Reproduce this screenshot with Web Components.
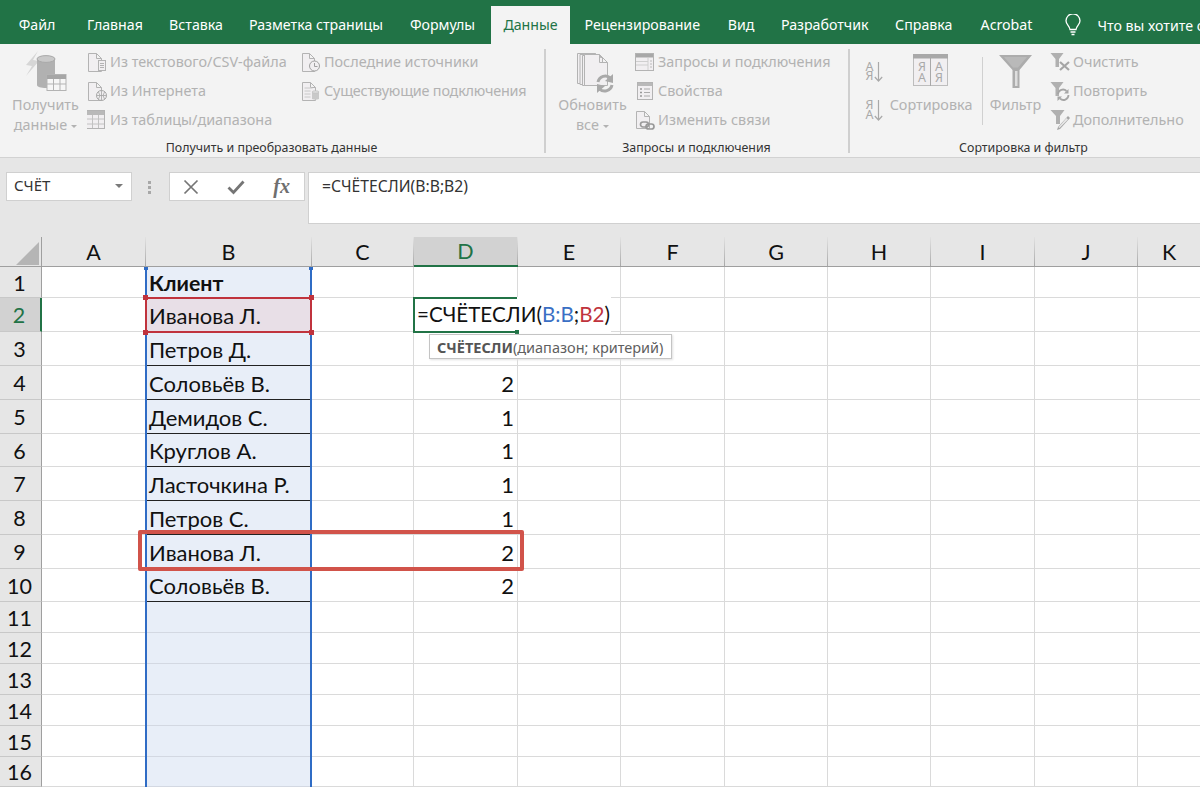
<!DOCTYPE html>
<html lang="ru">
<head>
<meta charset="utf-8">
<title>Excel</title>
<style>
  html, body { margin: 0; height: 787px; overflow: hidden; background: #fff; }
  body { display: flex; flex-direction: column; font-family: "Noto Sans", sans-serif; }
</style>
</head>
<body>
<x-tabbar></x-tabbar>
<x-ribbon>
  <x-ribbon-group label="Получить и преобразовать данные" style="width:546px" pad="6">
    <x-large-btn icon="getdata" iy="4" w="79" l1="Получить" l2="данные" caret></x-large-btn>
    <x-btn-col w="214" style="margin-left:2px">
      <x-small-btn icon="doccsv" label="Из текстового/CSV-файла"></x-small-btn>
      <x-small-btn icon="docweb" label="Из Интернета"></x-small-btn>
      <x-small-btn icon="table" label="Из таблицы/диапазона"></x-small-btn>
    </x-btn-col>
    <x-btn-col w="235">
      <x-small-btn icon="docclock" label="Последние источники"></x-small-btn>
      <x-small-btn icon="docdb" label="Существующие подключения" style="letter-spacing:-.2px"></x-small-btn>
    </x-btn-col>
  </x-ribbon-group>
  <x-ribbon-group label="Запросы и подключения" style="width:304px" pad="12">
    <x-large-btn icon="refresh" iy="5" w="69" l1="Обновить" l2="все" caret></x-large-btn>
    <x-btn-col w="210" style="margin-left:8px">
      <x-small-btn icon="queries" label="Запросы и подключения"></x-small-btn>
      <x-small-btn icon="props" label="Свойства"></x-small-btn>
      <x-small-btn icon="links" label="Изменить связи"></x-small-btn>
    </x-btn-col>
  </x-ribbon-group>
  <x-ribbon-group label="Сортировка и фильтр" style="flex:1" pad="15" last>
    <x-sort-col></x-sort-col>
    <x-large-btn icon="sort" iy="7" w="82" l1="Сортировка" style="margin-left:3px"></x-large-btn>
    <x-vsep></x-vsep>
    <x-large-btn icon="filter" iy="7" w="51" l1="Фильтр" style="margin-left:7px"></x-large-btn>
    <x-btn-col w="150" style="margin-left:9px">
      <x-small-btn icon="fclear" label="Очистить"></x-small-btn>
      <x-small-btn icon="frepeat" label="Повторить"></x-small-btn>
      <x-small-btn icon="fadv" label="Дополнительно"></x-small-btn>
    </x-btn-col>
  </x-ribbon-group>
</x-ribbon>
<x-formula-bar name="СЧЁТ" formula="=СЧЁТЕСЛИ(B:B;B2)"></x-formula-bar>
<x-sheet></x-sheet>

<script>
const G = '#b3b3b3', L = '#f1eff1';
const page = (x, y, w, h, f = 5) =>
  `<path d="M${x + .5} ${y + .5}h${w - f}l${f} ${f}v${h - f}h-${w}z M${x + w - f + .5} ${y + .5}v${f}h${f}" fill="${L}" stroke="${G}"/>`;

const ICONS = {
  getdata: `<svg width="42" height="42" viewBox="0 0 42 42">
    <path d="M13 0L1 14l6 1-6 10 13-15-6-1z" fill="#d6d6d6"/>
    <g transform="translate(1 0)">
    <path d="M11 8v26c0 2 4 3 9 3s9-1 9-3V8z" fill="#b1b1b1"/>
    <ellipse cx="20" cy="8" rx="9" ry="3.400" fill="#c9c9c9" stroke="#a9a9a9"/>
    <rect x="21" y="23.500" width="19" height="16" fill="#f6f6f6" stroke="${G}"/>
    <path d="M21 24h19v4H21z" fill="#a6a6a6"/>
    <path d="M21 33h19M27.500 28v11M34 28v11" stroke="${G}" fill="none"/>
    </g>
  </svg>`,
  doccsv: `<svg width="20" height="20" viewBox="0 0 20 20">${page(1, 1, 13, 18)}
    <rect x="11.500" y="8.500" width="7" height="10" fill="${L}" stroke="${G}"/><path d="M13 11.500h4M13 13.500h4M13 15.500h4" stroke="${G}"/></svg>`,
  docweb: `<svg width="20" height="20" viewBox="0 0 20 20">${page(1, 1, 13, 18)}
    <circle cx="14.500" cy="14.500" r="5" fill="${L}" stroke="#a5a5a5"/><path d="M9.500 14.500h10M14.500 9.500v10M11.500 11q3 3.500 0 7M17.500 11q-3 3.500 0 7" fill="none" stroke="#a5a5a5" stroke-width=".8"/></svg>`,
  table: `<svg width="20" height="20" viewBox="1 0 20 20"><rect x=".5" y=".5" width="18" height="18" fill="${L}" stroke="${G}"/>
    <path d="M1 1h17v4H1z" fill="#b9b9b9"/><path d="M1 9h17M1 14h17M6.500 5v13M12.500 5v13" stroke="#c2c2c2" fill="none"/></svg>`,
  docclock: `<svg width="20" height="20" viewBox="0 0 20 20">${page(1, 1, 12, 18)}
    <circle cx="13.500" cy="14" r="5" fill="${L}" stroke="#a0a0a0"/><path d="M13.500 11v3.500h3" fill="none" stroke="#a0a0a0"/></svg>`,
  docdb: `<svg width="20" height="20" viewBox="0 0 20 20">${page(1, 1, 13, 18)}
    <path d="M3.500 7h8M3.500 10h6M3.500 13h6M3.500 16h6" stroke="#c8c8c8"/>
    <path d="M11 11v7q3.500 1.500 7 0v-7z" fill="#c9c9c9"/><ellipse cx="14.500" cy="11" rx="3.500" ry="1.300" fill="#dcdcdc" stroke="#bcbcbc" stroke-width=".6"/></svg>`,
  refresh: `<svg width="42" height="42" viewBox="0 0 42 42">
    ${page(5, 1, 20, 30, 2)}${page(7.500, 2, 20, 30, 2)}${page(10, 3, 20, 30, 2)}${page(12, 2, 23, 31, 8)}
    <path d="M26 30a7.500 7.500 0 0 1 12.500-4" fill="none" stroke="#a9a9a9" stroke-width="3"/>
    <path d="M41 31v-9l-8 7z" fill="#a9a9a9"/>
    <path d="M40 33a7.500 7.500 0 0 1-12.500 4" fill="none" stroke="#a9a9a9" stroke-width="3"/>
    <path d="M25 32v9l8-7z" fill="#a9a9a9"/>
  </svg>`,
  queries: `<svg width="20" height="20" viewBox="0 0 20 20"><rect x=".5" y="1.500" width="18" height="17" fill="${L}" stroke="${G}"/>
    <path d="M1 2h17v3.500H1z" fill="#a8a8a8"/><path d="M1 9.500h12M1 13h12M13 6v12" stroke="#cfcfcf"/><path d="M15 9h2M15 12h2M15 15h2" stroke="#bbb"/></svg>`,
  props: `<svg width="20" height="20" viewBox="0 0 20 20"><rect x="2.500" y="1.500" width="15" height="17" fill="${L}" stroke="${G}"/>
    <path d="M3 2h14v3H3z" fill="#b9b9b9"/><path d="M5 8h2M5 11.500h2M5 15h2" stroke="#999" stroke-width="1.600"/><path d="M9 8h6M9 11.500h6M9 15h6" stroke="#aaa"/></svg>`,
  links: `<svg width="20" height="20" viewBox="0 0 20 20">${page(1, 1, 13, 17)}
    <rect x="5.500" y="12" width="8" height="5" rx="2.500" fill="none" stroke="#999" stroke-width="1.700"/>
    <rect x="11" y="14" width="8" height="5" rx="2.500" fill="none" stroke="#999" stroke-width="1.700"/></svg>`,
  sort: `<svg width="36" height="34" viewBox="0 0 36 34" font-family="Noto Sans" font-size="12.500" fill="#a9a9a9" text-anchor="middle">
    <rect x=".5" y=".5" width="34" height="31" fill="${L}" stroke="#bdbdbd"/><path d="M0 0h35v4.500H0z" fill="#a9a9a9"/><path d="M17.500 4v28" stroke="#a9a9a9"/>
    <text x="9" y="17">Я<tspan x="9" dy="11">А</tspan></text><text x="26" y="17">А<tspan x="26" dy="11">Я</tspan></text></svg>`,
  filter: `<svg width="34" height="34" viewBox="0 0 34 34"><path d="M0 1h33L20.500 16v18h-7V16z" fill="#acacac"/><path d="M16 17h2.500v15H16z" fill="#dedede"/><path d="M5 3h23l-9 10.500h-5z" fill="#b9b9b9"/></svg>`,
  fclear: `<svg width="20" height="20" viewBox="0 0 20 20"><path d="M.500 1h13L9 7v8H5.500V7z" fill="#b0b0b0"/><path d="M10 10l9 8M19 10l-9 8" stroke="#a5a5a5" stroke-width="2.200"/></svg>`,
  frepeat: `<svg width="20" height="20" viewBox="0 0 20 20"><path d="M.500 1h13L9 7v8H5.500V7z" fill="#b0b0b0"/>
    <path d="M8 13a5 5 0 0 1 8.500-3M18.500 14a5 5 0 0 1-8.500 3.500" fill="none" stroke="#a5a5a5" stroke-width="1.800"/><path d="M18.500 8v4.500h-4.500zM7.500 20v-4.500h4.500z" fill="#a5a5a5"/></svg>`,
  fadv: `<svg width="20" height="22" viewBox="0 0 20 22"><path d="M.500 1h14L10 7v8H6V7z" fill="#b0b0b0"/><path d="M18 7L8 18l-1 3 3-1L20 9z" fill="#a5a5a5"/><path d="M16.500 9l1.500 1.500L9.500 19 8.500 18.200z" fill="#e8e8e8"/></svg>`
};

class XTabbar extends HTMLElement {
  connectedCallback() {
    const tabs = [['Файл', 68], ['Главная', 88], ['Вставка', 74], ['Разметка страницы', 166], ['Формулы', 87, 0, 5],
      ['Данные', 79, 1], ['Рецензирование', 144.5], ['Вид', 53], ['Разработчик', 114.5], ['Справка', 83.5], ['Acrobat', 82]];
    this.attachShadow({ mode: 'open' });
    this.shadowRoot.innerHTML = `
      <style>
        :host { display: flex; flex: none; height: 44px; background: #217346; color: #fff; font: 14.200px "Noto Sans", sans-serif; padding-left: 3px; box-sizing: border-box; white-space: nowrap; overflow: hidden; }
        .tab { flex: none; margin-top: 6px; height: 38px; padding-bottom: 1px; box-sizing: border-box; display: flex; align-items: center; justify-content: center; }
        .on { background: #f3f3f3; color: #217346; }
        .tell { flex: none; display: flex; align-items: center; margin: 6px 0 0 17px; height: 38px; gap: 17px; }
      </style>
      ${tabs.map(t => `<div class="tab ${t[2] ? 'on' : ''}" style="width:${t[1]}px;margin-right:${t[3] || 0}px">${t[0]}</div>`).join('')}
      <div class="tell">
        <svg width="16" height="22" viewBox="0 0 16 22" fill="none" stroke="#fff" stroke-width="1.300"><path d="M5 15.500C4.500 12 1 10.500 1 6.800a7 7 0 0 1 14 0C15 10.500 11.500 12 11 15.500z"/><path d="M5.500 18h5M6.500 20.500h3"/></svg>
        <span>Что вы хотите с</span>
      </div>`;
  }
}

class XRibbon extends HTMLElement {
  connectedCallback() {
    this.attachShadow({ mode: 'open' });
    this.shadowRoot.innerHTML = `
      <style>:host { display: flex; flex: none; height: 114px; background: #f3f3f3; border-bottom: 1px solid #d2d2d2; box-sizing: border-box; font: 14.400px "Noto Sans", sans-serif; color: #b2b2b2; }</style>
      <slot></slot>`;
  }
}

class XRibbonGroup extends HTMLElement {
  connectedCallback() {
    const last = this.hasAttribute('last');
    this.attachShadow({ mode: 'open' });
    this.shadowRoot.innerHTML = `
      <style>
        :host { display: flex; flex-direction: column; flex: none; box-sizing: border-box; height: 113px; position: relative; }
        .body { display: flex; height: 96px; padding: 3px 0 0 ${this.getAttribute('pad')}px; box-sizing: border-box; }
        .label { text-align: center; font-size: 12.400px; color: #333; height: 17px; line-height: 16px; padding-right: 3px; }
        .sep { position: absolute; right: 0; top: 5px; bottom: 4px; width: 2px; background: #cfcfcf; display: ${last ? 'none' : 'block'}; }
      </style>
      <div class="body"><slot></slot></div>
      <div class="label">${this.getAttribute('label')}</div>
      <div class="sep"></div>`;
  }
}

class XLargeBtn extends HTMLElement {
  connectedCallback() {
    const l2 = this.getAttribute('l2');
    const caret = this.hasAttribute('caret') ? '<i></i>' : '';
    this.attachShadow({ mode: 'open' });
    this.shadowRoot.innerHTML = `
      <style>
        :host { display: flex; flex-direction: column; align-items: center; flex: none; width: ${this.getAttribute('w')}px; white-space: nowrap; }
        .ic { height: 45px; box-sizing: border-box; padding-top: ${this.getAttribute('iy') || 0}px; display: flex; align-items: flex-start; justify-content: center; }
        .t { height: 20px; line-height: 20px; }
        .ic + .t { margin-top: 3px; }
        i { display: inline-block; margin-left: 4px; vertical-align: 2px; border: 3px solid transparent; border-top: 3.500px solid #b2b2b2; border-bottom: 0; }
      </style>
      <div class="ic">${ICONS[this.getAttribute('icon')]}</div>
      <div class="t">${this.getAttribute('l1')}</div>
      ${l2 ? `<div class="t">${l2}${caret}</div>` : ''}`;
  }
}

class XBtnCol extends HTMLElement {
  connectedCallback() {
    this.attachShadow({ mode: 'open' });
    this.shadowRoot.innerHTML = `
      <style>:host { display: flex; flex-direction: column; flex: none; width: ${this.getAttribute('w')}px; }</style>
      <slot></slot>`;
  }
}

class XSmallBtn extends HTMLElement {
  connectedCallback() {
    this.attachShadow({ mode: 'open' });
    this.shadowRoot.innerHTML = `
      <style>
        :host { display: flex; align-items: center; height: 29px; white-space: nowrap; }
        .ic { width: 23px; height: 22px; flex: none; display: flex; align-items: center; }
      </style>
      <div class="ic">${ICONS[this.getAttribute('icon')]}</div>
      <span>${this.getAttribute('label')}</span>`;
  }
}

class XSortCol extends HTMLElement {
  connectedCallback() {
    const arrow = h => `<path d="M13.500 5v${h}M9.800 ${h + 1}l3.700 4 3.700-4" fill="none" stroke="#a9a9a9" stroke-width="1.200"/>`;
    this.attachShadow({ mode: 'open' });
    this.shadowRoot.innerHTML = `
      <style>
        :host { display: flex; flex-direction: column; flex: none; width: 22px; gap: 12px; padding-top: 10px; }
        svg { overflow: visible; }
        text { font-family: "Noto Sans", sans-serif; font-size: 12.500px; fill: #a9a9a9; }
      </style>
      <svg width="20" height="26" viewBox="0 0 20 26"><text x="0.500" y="14">А<tspan x="0.500" dy="9">Я</tspan></text>${arrow(19)}</svg>
      <svg width="20" height="26" viewBox="0 0 20 26"><text x="0.500" y="14">Я<tspan x="0.500" dy="10">А</tspan></text>${arrow(20)}</svg>`;
  }
}

class XVsep extends HTMLElement {
  connectedCallback() {
    this.attachShadow({ mode: 'open' });
    this.shadowRoot.innerHTML = `<style>:host { display: block; flex: none; width: 1px; height: 68px; margin: 10px 0 0 10px; background: #d0d0d0; }</style>`;
  }
}

class XFormulaBar extends HTMLElement {
  connectedCallback() {
    this.attachShadow({ mode: 'open' });
    this.shadowRoot.innerHTML = `
      <style>
        :host { display: flex; flex: none; align-items: flex-start; height: 79px; padding: 14px 0 0 6px; box-sizing: border-box; background: #e6e6e6; font: 15.700px "Noto Sans", sans-serif; color: #333; }
        .box { background: #fff; border: 1px solid #d0d0d0; box-sizing: border-box; display: flex; align-items: center; }
        .name { width: 126px; height: 29px; padding: 0 8px 0 7px; justify-content: space-between; font-size: 15px; line-height: 25px; align-items: flex-start; }
        .name i { margin-top: 11px; border: 4px solid transparent; border-top: 4px solid #7a7a7a; border-bottom: 0; }
        .grip { width: 3px; height: 3px; margin: 9px 18px 0 16px; background: #a8a8a8; box-shadow: 0 5px #a8a8a8, 0 10px #a8a8a8; }
        .fx { width: 136px; height: 29px; justify-content: space-between; padding: 0 14px 0 13px; }
        .fx em { font: italic bold 20px "Liberation Serif", serif; color: #6f6f6f; }
        .input { flex: 1; height: 52px; margin-left: 3px; border-right: 0; align-items: flex-start; padding: 2px 0 0 13px; }
      </style>
      <div class="box name"><span>${this.getAttribute('name')}</span><i></i></div>
      <div class="grip"></div>
      <div class="box fx">
        <svg width="16" height="16" viewBox="0 0 16 16"><path d="M1.500 1.500l13 13M14.500 1.500l-13 13" stroke="#757575" stroke-width="1.700"/></svg>
        <svg width="18" height="16" viewBox="0 0 18 16"><path d="M1.500 8.500l5 5L16.500 2.500" fill="none" stroke="#757575" stroke-width="2.800"/></svg>
        <em>fx</em>
      </div>
      <div class="box input">${this.getAttribute('formula')}</div>`;
  }
}

class XSheet extends HTMLElement {
  connectedCallback() {
    const cols = ['A', 'B', 'C', 'D', 'E', 'F', 'G', 'H', 'I', 'J', 'K'];
    const names = ['Клиент', 'Иванова Л.', 'Петров Д.', 'Соловьёв В.', 'Демидов С.', 'Круглов А.', 'Ласточкина Р.', 'Петров С.', 'Иванова Л.', 'Соловьёв В.'];
    const counts = { 4: 2, 5: 1, 6: 1, 7: 1, 8: 1, 9: 2, 10: 2 };
    let html = '<div class="corner"><b></b></div>';
    cols.forEach(c => { html += `<div class="ch ${c === 'D' ? 'act' : ''}">${c}</div>`; });
    for (let r = 1; r <= 16; r++) {
      html += `<div class="rh ${r === 2 ? 'act' : ''}">${r}</div>`;
      cols.forEach(c => {
        let cls = 'c', txt = '';
        if (c === 'B') {
          cls += r > 1 && r <= 10 ? ' sel under' : ' sel';
          if (r === 2) cls += ' cur';
          txt = names[r - 1] || '';
          if (r === 1) txt = `<b>${txt}</b>`;
        }
        if (c === 'D' && counts[r]) { cls += ' num'; txt = counts[r]; }
        html += `<div class="${cls}">${txt}</div>`;
      });
    }
    this.attachShadow({ mode: 'open' });
    this.shadowRoot.innerHTML = `
      <style>
        :host { display: grid; flex: none; position: relative; overflow: hidden; height: 550px; font: 22px Lato, "Noto Sans", sans-serif; color: #111; background: #fff;
          grid-template-columns: 42px 104px 166px 102px 104px 103px 104px 103px 103px 104px 103px 63px;
          grid-template-rows: 30px 31px 34px 34px 34px 34px 33px 34px 34px 34px 33px repeat(5, 31px); }
        .corner { background: #e6e6e6; border-right: 1px solid #9f9f9f; border-bottom: 1px solid #9f9f9f; position: relative; }
        .corner b { position: absolute; right: 2px; bottom: 1px; border-style: solid; border-width: 0 0 23px 23px; border-color: transparent transparent #b5b5b5 transparent; }
        .ch { background: linear-gradient(#e2e2e2, #a8a8a8) right / 1px 100% no-repeat #e6e6e6; border-bottom: 1px solid #9f9f9f; display: flex; align-items: center; justify-content: center; padding-right: 1px; font-size: 21.500px; }
        .rh { background: #e6e6e6; border-right: 1px solid #9f9f9f; border-bottom: 1px solid #c8c8c8; display: flex; align-items: center; justify-content: center; padding: 1px 2px 0 0; font-size: 21.500px; }
        .act { background-color: #d2d2d2; color: #217346; }
        .ch.act { border-bottom: 2px solid #217346; }
        .rh.act { border-right: 2px solid #217346; }
        .c { border-right: 1px solid #dadada; border-bottom: 1px solid #dadada; display: flex; align-items: center; padding: 1px 3px 0; white-space: nowrap; }
        .c b { font-size: 21.300px; }
        .sel { background: #e8eef8; border-right-color: #e8eef8; border-bottom-color: #d3d8e2; }
        .under { border-bottom-color: #222; }
        .cur { background: #e8dfe7; }
        .num { justify-content: flex-end; }
        .range { position: absolute; left: 145px; top: 30px; width: 163px; bottom: -4px; border-left: 2px solid #2f6cc5; border-right: 2px solid #2f6cc5; }
        .range::before, .range::after { content: ""; position: absolute; top: 0; width: 4px; height: 3px; background: #2f6cc5; }
        .range::before { left: -3px; } .range::after { right: -3px; }
        .ref { position: absolute; left: 145px; top: 60px; width: 163px; height: 32px; border: 2px solid #c0333d; }
        .ref i { position: absolute; width: 5px; height: 5px; background: #c0333d; }
        .edit { position: absolute; left: 413px; top: 60px; height: 36px; width: 198px; display: flex; align-items: center; padding: 0 0 2px 4px; box-sizing: border-box; background: #fff; font-size: 20.600px; color: #111; white-space: nowrap; }
        .edit::before { content: ""; position: absolute; left: 0; top: 0; width: 102px; height: 32px; border: 2px solid #217346; border-right: 0; }
        .edit::after { content: ""; position: absolute; left: 102px; top: 33px; width: 4px; height: 4px; background: #217346; }
        .edit s { text-decoration: none; color: #3a6fc4; } .edit u { text-decoration: none; color: #c0333d; }
        .tip { position: absolute; left: 429px; top: 97px; width: 243px; height: 25px; box-sizing: border-box; border: 1px solid #c4c4c4; background: #fff; box-shadow: 1px 1px 2px #e0e0e0; font: 14.500px "Noto Sans", sans-serif; color: #5f5f5f; display: flex; align-items: center; padding-left: 7px; white-space: nowrap; }
        .tip b { color: #555; }
        .mark { position: absolute; left: 138px; top: 293px; width: 386px; height: 41px; box-sizing: border-box; border: 4px solid #d1534a; border-radius: 2px; }
      </style>
      ${html}
      <div class="range"></div>
      <div class="ref">
        <i style="left:-4px;top:-4px"></i><i style="right:-4px;top:-4px"></i><i style="left:-4px;bottom:-4px"></i><i style="right:-4px;bottom:-4px"></i>
      </div>
      <div class="edit"><span>=СЧЁТЕСЛИ(<s>B:B</s>;<u>B2</u>)</span></div>
      <div class="tip"><b>СЧЁТЕСЛИ</b>(диапазон; критерий)</div>
      <div class="mark"></div>`;
  }
}

customElements.define('x-tabbar', XTabbar);
customElements.define('x-ribbon', XRibbon);
customElements.define('x-ribbon-group', XRibbonGroup);
customElements.define('x-large-btn', XLargeBtn);
customElements.define('x-btn-col', XBtnCol);
customElements.define('x-small-btn', XSmallBtn);
customElements.define('x-sort-col', XSortCol);
customElements.define('x-vsep', XVsep);
customElements.define('x-formula-bar', XFormulaBar);
customElements.define('x-sheet', XSheet);
</script>
</body>
</html>
